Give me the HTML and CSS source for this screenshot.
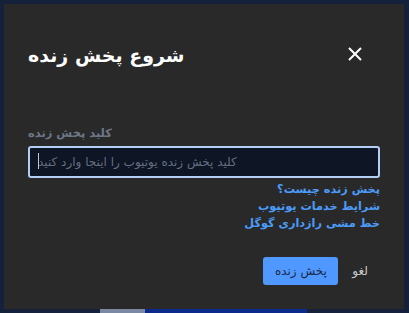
FILE: index.html
```html
<!DOCTYPE html>
<html lang="fa">
<head>
<meta charset="utf-8">
<title>شروع پخش زنده</title>
<link rel="stylesheet" href="styles.css">
</head>
<body>
<div class="dialog">
  <div class="header">
    <h1 class="title" dir="rtl">شروع پخش زنده</h1>
    <button class="close" aria-label="بستن">
      <svg width="14" height="14" viewBox="0 0 14 14"><path d="M1 1 L13 13 M13 1 L1 13" stroke="#ffffff" stroke-width="2" fill="none"/></svg>
    </button>
  </div>
  <label class="label" dir="rtl" for="key">کلید پخش زنده</label>
  <div class="field">
    <input id="key" class="input" type="text" placeholder="کلید پخش زنده یوتیوب را اینجا وارد کنید">
    <span class="caret"></span>
  </div>
  <div class="links" dir="rtl">
    <a href="#">پخش زنده چیست؟</a>
    <a href="#">شرایط خدمات یوتیوب</a>
    <a href="#">خط مشی رازداری گوگل</a>
  </div>
  <div class="actions">
    <button class="btn primary" dir="rtl">پخش زنده</button>
    <button class="btn cancel" dir="rtl">لغو</button>
  </div>
</div>
<div class="peek"><span class="peek-grey"></span><span class="peek-blue"></span></div>
</body>
</html>
```
FILE: styles.css
```css
html, body {
  margin: 0;
  padding: 0;
}
body {
  background: #15203a;
  font-family: "DejaVu Sans", "Noto Sans", sans-serif;
  width: 409px;
  height: 313px;
  overflow: hidden;
}
.dialog {
  box-sizing: border-box;
  margin: 4px 0 0 4px;
  width: 400px;
  height: 305px;
  background: #292929;
  padding: 31px 24px 24px 24px;
  display: flex;
  flex-direction: column;
}
.header {
  display: flex;
  justify-content: space-between;
  align-items: center;
  height: 40px;
}
.title {
  margin: 0;
  font-size: 19px;
  font-weight: bold;
  color: #ffffff;
  line-height: 40px;
}
.close {
  background: none;
  border: 0;
  padding: 0;
  margin-right: 18px;
  margin-top: -2px;
  width: 14px;
  height: 14px;
  display: flex;
  cursor: pointer;
}
.label {
  margin-top: 50px;
  font-size: 11.5px;
  font-weight: bold;
  line-height: 16px;
  color: #6d7686;
  text-align: left;
}
.field {
  position: relative;
  margin-top: 5px;
  width: 352px;
  height: 32px;
}
.input {
  box-sizing: border-box;
  width: 100%;
  height: 100%;
  background: #0e1524;
  border: 2px solid #b4cdf4;
  border-radius: 3px;
  outline: none;
  padding: 0 8px;
  font-family: inherit;
  font-size: 12px;
  color: #c8d0dc;
}
.input::placeholder {
  color: #646e80;
}
.caret {
  position: absolute;
  left: 10px;
  top: 7px;
  width: 1px;
  height: 16px;
  background: #c3cad6;
}
.links {
  margin-top: 3px;
  display: flex;
  flex-direction: column;
  align-items: flex-start;
}
.links a {
  font-size: 11.3px;
  font-weight: bold;
  line-height: 17px;
  color: #4b9bf7;
  text-decoration: none;
}
.actions {
  margin-top: auto;
  display: flex;
  justify-content: flex-end;
  align-items: center;
  gap: 0;
}
.btn {
  height: 28px;
  border: 0;
  border-radius: 3px;
  font-family: inherit;
  font-size: 12px;
  cursor: pointer;
}
.primary {
  background: #4f98ff;
  color: #1b2a48;
  padding: 0 11.5px;
}
.cancel {
  background: transparent;
  color: #c9c9c9;
  padding: 0 12px 0 14px;
}
.peek {
  display: flex;
  margin-left: 100px;
  height: 4px;
}
.peek-grey {
  width: 45px;
  background: #7b8aa2;
}
.peek-blue {
  width: 162px;
  background: #0c2a8c;
}
```
